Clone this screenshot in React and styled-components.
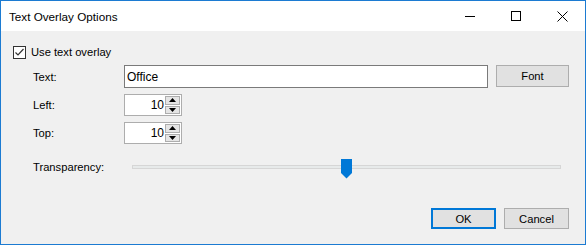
import React, { useState } from 'react';
import styled, { createGlobalStyle } from 'styled-components';

const GlobalStyle = createGlobalStyle`
    html, body {
        margin: 0;
        padding: 0;
        background: #ffffff;
    }
    body {
        font-family: "Liberation Sans", Arial, sans-serif;
        font-size: 11.2px;
        color: #000;
    }
`;

const Window = styled.div`
    width: 586px;
    height: 245px;
    box-sizing: border-box;
    border: 1px solid #1c7bd2;
    display: flex;
    flex-direction: column;
    background: #f0f0f0;
`;

const TitleBar = styled.div`
    flex: none;
    height: 30px;
    display: flex;
    align-items: center;
    background: #ffffff;
`;

const Title = styled.div`
    flex: 1;
    padding-left: 8px;
    font-size: 11.7px;
`;

const CaptionButton = styled.div`
    width: 46px;
    height: 30px;
    display: flex;
    align-items: center;
    justify-content: center;
`;

const Body = styled.div`
    flex: 1;
    display: flex;
    flex-direction: column;
    padding: 15px 16px 15px 12px;
`;

const CheckRow = styled.label`
    display: flex;
    align-items: center;
    gap: 5px;
    height: 13px;
    line-height: 13px;
`;

const CheckBox = styled.span`
    width: 13px;
    height: 13px;
    box-sizing: border-box;
    border: 1px solid #333333;
    background: #ffffff;
    display: flex;
    align-items: center;
    justify-content: center;
`;

const Form = styled.div`
    display: grid;
    grid-template-columns: 91px 1fr;
    row-gap: 6px;
    margin: 6px 0 0 20px;
    align-items: center;
`;

const Label = styled.span`
    line-height: 14px;
`;

const FieldRow = styled.div`
    display: flex;
    gap: 8px;
`;

const TextInput = styled.input`
    flex: 1;
    height: 23px;
    box-sizing: border-box;
    border: 1px solid #7a7a7a;
    padding: 0 2px;
    font: inherit;
    font-size: 12px;
    color: #000;
    background: #fff;
    outline: none;
`;

const PushButton = styled.button`
    width: ${(p) => p.$w || 65}px;
    height: ${(p) => p.$h || 21}px;
    box-sizing: border-box;
    border: ${(p) => (p.$default ? '2px solid #0078d7' : '1px solid #adadad')};
    background: #e1e1e1;
    font: inherit;
    color: #000;
    padding: 0;
`;

const Spin = styled.div`
    width: 58px;
    height: 22px;
    box-sizing: border-box;
    border: 1px solid #adadad;
    background: #fff;
    display: flex;
`;

const SpinValue = styled.div`
    flex: 1;
    text-align: right;
    line-height: 20px;
    font-size: 12px;
    padding-right: 1px;
`;

const SpinButtons = styled.div`
    width: 15px;
    display: flex;
    flex-direction: column;
    gap: 1px;
    padding: 1px 1px 1px 0;
`;

const SpinButton = styled.div`
    flex: 1;
    box-sizing: border-box;
    border: 1px solid #adadad;
    background: #e5e5e5;
    display: flex;
    align-items: center;
    justify-content: center;
`;

const SliderRow = styled.div`
    display: grid;
    grid-template-columns: 91px 1fr;
    margin: 13px 0 0 20px;
    align-items: center;
    height: 20px;
`;

const SliderArea = styled.div`
    padding: 0 8px;
`;

const Track = styled.div`
    position: relative;
    height: 4px;
    box-sizing: border-box;
    border: 1px solid #d6d6d6;
    background: #e7eaea;
`;

const Thumb = styled.svg`
    position: absolute;
    top: -7px;
    margin-left: -5.5px;
`;

const Footer = styled.div`
    margin-top: auto;
    display: flex;
    justify-content: flex-end;
    gap: 8px;
`;

function SpinBox({ value }) {
    return (
        <Spin>
            <SpinValue>{value}</SpinValue>
            <SpinButtons>
                <SpinButton>
                    <svg width="7" height="4" viewBox="0 0 7 4"><path d="M0 4L3.5 0L7 4Z" fill="#000" /></svg>
                </SpinButton>
                <SpinButton>
                    <svg width="7" height="4" viewBox="0 0 7 4"><path d="M0 0L3.5 4L7 0Z" fill="#000" /></svg>
                </SpinButton>
            </SpinButtons>
        </Spin>
    );
}

export default function App() {
    const [enabled, setEnabled] = useState(true);
    const [text, setText] = useState('Office');
    const transparency = 50;

    return (
        <Window>
            <GlobalStyle />
            <TitleBar>
                <Title>Text Overlay Options</Title>
                <CaptionButton>
                    <svg width="10" height="10" viewBox="0 0 10 10">
                        <path d="M0 5.5H10" stroke="#000" strokeWidth="1" />
                    </svg>
                </CaptionButton>
                <CaptionButton>
                    <svg width="10" height="10" viewBox="0 0 10 10">
                        <rect x="0.5" y="0.5" width="9" height="9" fill="none" stroke="#000" />
                    </svg>
                </CaptionButton>
                <CaptionButton>
                    <svg width="11" height="11" viewBox="0 0 11 11">
                        <path d="M0.5 0.5L10.5 10.5M10.5 0.5L0.5 10.5" stroke="#000" strokeWidth="1" />
                    </svg>
                </CaptionButton>
            </TitleBar>
            <Body>
                <CheckRow onClick={() => setEnabled(!enabled)}>
                    <CheckBox>
                        {enabled && (
                            <svg width="11" height="11" viewBox="0 0 11 11">
                                <path d="M1.5 5.5L4 8L9.5 2" fill="none" stroke="#333" strokeWidth="1.2" />
                            </svg>
                        )}
                    </CheckBox>
                    <span>Use text overlay</span>
                </CheckRow>
                <Form>
                    <Label>Text:</Label>
                    <FieldRow>
                        <TextInput value={text} onChange={(e) => setText(e.target.value)} />
                        <PushButton $w={73} $h={22}>Font</PushButton>
                    </FieldRow>
                    <Label>Left:</Label>
                    <SpinBox value={10} />
                    <Label>Top:</Label>
                    <SpinBox value={10} />
                </Form>
                <SliderRow>
                    <Label>Transparency:</Label>
                    <SliderArea>
                        <Track>
                            <Thumb
                                width="11"
                                height="20"
                                viewBox="0 0 11 20"
                                style={{ left: `calc(5.5px + (100% - 11px) * ${transparency / 100})` }}
                            >
                                <path d="M0 0H11V14L5.5 19.5L0 14Z" fill="#0078d7" />
                            </Thumb>
                        </Track>
                    </SliderArea>
                </SliderRow>
                <Footer>
                    <PushButton $default>OK</PushButton>
                    <PushButton>Cancel</PushButton>
                </Footer>
            </Body>
        </Window>
    );
}
